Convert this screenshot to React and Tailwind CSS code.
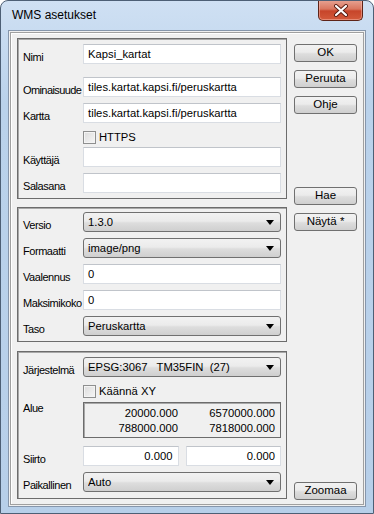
import React from "react";

const btnBg =
  "bg-[linear-gradient(#f2f2f2,#ebebeb_45%,#dddddd_55%,#cfcfcf)]";

function Label({ children, className = "" }) {
  return (
    <div
      className={`w-[60px] shrink-0 whitespace-nowrap text-[11px] tracking-[-0.45px] ${className}`}
    >
      {children}
    </div>
  );
}

function Field({ value = "", right = false }) {
  return (
    <div
      className={`h-[20px] bg-white border border-[#d9dde3] border-t-[#c0c4ca] leading-[18px] whitespace-nowrap overflow-hidden ${
        right ? "text-right pr-[5px]" : "pl-[4px]"
      }`}
    >
      {value}
    </div>
  );
}

function Combo({ value }) {
  return (
    <div
      className={`h-[20px] flex items-center rounded-[3px] border border-[#707070] ${btnBg} pl-[4px] pr-[6px]`}
    >
      <span className="flex-1 whitespace-pre overflow-hidden">{value}</span>
      <svg width="8" height="5" viewBox="0 0 8 5">
        <path d="M0 0h8L4 5z" fill="#000" />
      </svg>
    </div>
  );
}

function Check({ label }) {
  return (
    <div className="h-[12px] flex items-center pl-[60px] gap-[3px]">
      <div className="w-[13px] h-[13px] border border-[#8e8f8f] bg-[linear-gradient(135deg,#dcdcdc,#f6f6f6)] shadow-[inset_0_0_0_1px_#f4f4f4]" />
      <span className="leading-[13px]">{label}</span>
    </div>
  );
}

function Row({ label, children, className = "" }) {
  return (
    <div className={`flex h-[20px] ${className}`}>
      <Label className="h-[20px] pt-[7px] leading-[13px]">{label}</Label>
      <div className="flex-1">{children}</div>
    </div>
  );
}

function Panel({ children, className = "" }) {
  return (
    <div
      className={`border border-[#6c6c6c] shadow-[inset_1px_1px_0_#a8a8a8] pl-[5px] pr-[5px] flex flex-col ${className}`}
    >
      {children}
    </div>
  );
}

function Button({ children, className = "" }) {
  return (
    <div
      className={`h-[18px] w-[63px] flex items-center justify-center rounded-[3px] border border-[#707070] ${btnBg} text-[11.5px] leading-none ${className}`}
    >
      {children}
    </div>
  );
}

function CloseButton() {
  return (
    <div className="w-[45px] h-[21px] rounded-b-[5px] border border-t-0 border-[#5e2418] bg-[linear-gradient(#e7a494,#d9765f_45%,#c7452a_55%,#d35a3b)] shadow-[inset_0_0_0_1px_rgba(255,200,190,0.45)] flex items-center justify-center">
      <svg width="16" height="13" viewBox="0 0 16 13">
        <path d="M3 2l10 9M13 2L3 11" stroke="#5a1d12" strokeWidth="4" strokeLinecap="round" />
        <path d="M3 2l10 9M13 2L3 11" stroke="#fff" strokeWidth="2.2" strokeLinecap="round" />
      </svg>
    </div>
  );
}

export default function App() {
  return (
    <div className="w-[374px] h-[514px] flex flex-col rounded-t-[8px] border border-[#4d5f75] bg-[linear-gradient(#cfe0f3,#bad2eb_20%,#b7cfe9)] font-['Liberation_Sans',sans-serif] text-[11.25px] text-black overflow-hidden">
      {/* title bar */}
      <div className="h-[29px] flex items-start shrink-0">
        <span className="ml-[11px] mt-[7px] text-[12px] leading-[14px] text-[#000]">
          WMS asetukset
        </span>
        <div className="ml-auto mr-[10px] -mt-[1px]">
          <CloseButton />
        </div>
      </div>

      {/* client area */}
      <div className="flex-1 mx-[7px] mb-[6px] border border-[#8696ab] bg-[#f0f0f0] p-[1px] flex">
        <div className="flex-1 border border-[#a0a0a0] shadow-[inset_1px_1px_0_#fff] pt-[5px] pl-[6px] pr-[6px] pb-[4px] flex gap-[7px]">
          {/* panels */}
          <div className="w-[270px] flex flex-col">
            <Panel className="pt-[5px] pb-[5px]">
              <Row label="Nimi">
                <Field value="Kapsi_kartat" />
              </Row>
              <Row label={<span className="tracking-[-0.6px]">Ominaisuude</span>} className="mt-[13px]">
                <Field value="tiles.kartat.kapsi.fi/peruskartta" />
              </Row>
              <Row label="Kartta" className="mt-[6px]">
                <Field value="tiles.kartat.kapsi.fi/peruskartta" />
              </Row>
              <div className="mt-[8px] mb-[4px]">
                <Check label="HTTPS" />
              </div>
              <Row label="Käyttäjä">
                <Field />
              </Row>
              <Row label="Salasana" className="mt-[6px]">
                <Field />
              </Row>
            </Panel>

            <Panel className="mt-[8px] pt-[4px] pb-[5px] gap-[6px]">
              <Row label="Versio">
                <Combo value="1.3.0" />
              </Row>
              <Row label="Formaatti">
                <Combo value="image/png" />
              </Row>
              <Row label="Vaalennus">
                <Field value="0" />
              </Row>
              <Row label="Maksimikoko">
                <Field value="0" />
              </Row>
              <Row label="Taso">
                <Combo value="Peruskartta" />
              </Row>
            </Panel>

            <Panel className="mt-[9px] pt-[5px] pb-[6px]">
              <Row label="Järjestelmä">
                <Combo value="EPSG:3067   TM35FIN  (27)" />
              </Row>
              <div className="mt-[8px] mb-[5px]">
                <Check label="Käännä XY" />
              </div>
              <div className="flex">
                <Label className="pt-0 leading-[13px]">Alue</Label>
                <div className="flex-1 h-[36px] border border-[#6c6c6c] shadow-[inset_1px_1px_0_#a8a8a8] grid grid-cols-[94px_1fr] pt-[4px] pr-[5px] leading-[13px] text-right">
                  <span>20000.000</span>
                  <span>6570000.000</span>
                  <span>788000.000</span>
                  <span>7818000.000</span>
                </div>
              </div>
              <Row label="Siirto" className="mt-[8px]">
                <div className="flex gap-[7px]">
                  <div className="flex-1">
                    <Field value="0.000" right />
                  </div>
                  <div className="flex-1">
                    <Field value="0.000" right />
                  </div>
                </div>
              </Row>
              <Row label="Paikallinen" className="mt-[6px]">
                <Combo value="Auto" />
              </Row>
            </Panel>
          </div>

          {/* buttons */}
          <div className="flex flex-col pt-[6px]">
            <Button>OK</Button>
            <Button className="mt-[8px]">Peruuta</Button>
            <Button className="mt-[8px]">Ohje</Button>
            <Button className="mt-[73px]">Hae</Button>
            <Button className="mt-[8px]">Näytä *</Button>
            <Button className="mt-auto">Zoomaa</Button>
          </div>
        </div>
      </div>
    </div>
  );
}
